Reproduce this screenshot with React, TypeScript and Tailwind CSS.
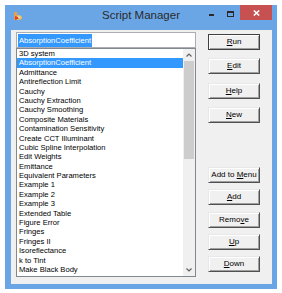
import React from "react";

const items = [
  "3D system",
  "AbsorptionCoefficient",
  "Admittance",
  "Antireflection Limit",
  "Cauchy",
  "Cauchy Extraction",
  "Cauchy Smoothing",
  "Composite Materials",
  "Contamination Sensitivity",
  "Create CCT Illuminant",
  "Cubic Spline Interpolation",
  "Edit Weights",
  "Emittance",
  "Equivalent Parameters",
  "Example 1",
  "Example 2",
  "Example 3",
  "Extended Table",
  "Figure Error",
  "Fringes",
  "Fringes II",
  "Isoreflectance",
  "k to Tint",
  "Make Black Body",
  "Make Broadband",
];

function Btn({
  pre,
  u,
  post,
  def,
  className,
}: {
  pre: string;
  u: string;
  post: string;
  def?: boolean;
  className?: string;
}) {
  return (
    <div
      className={
        "w-[52px] h-[16px] flex items-center justify-center bg-[#f0f0f0] text-[8px] leading-none text-black " +
        (def
          ? "border border-[#404040] shadow-[inset_1px_1px_0_#ffffff,inset_-1px_-1px_0_#a0a0a0] "
          : "border border-t-[#e8e8e8] border-l-[#e8e8e8] border-r-[#505050] border-b-[#505050] shadow-[inset_1px_1px_0_#ffffff,inset_-1px_-1px_0_#a0a0a0] ") +
        (className ?? "")
      }
    >
      <span>
        {pre}
        <span className="underline decoration-[0.5px] underline-offset-[1px]">{u}</span>
        {post}
      </span>
    </div>
  );
}

export default function App() {
  return (
    <div
      className="w-[282px] h-[293px] bg-white pt-[5px] pl-[5px]"
      style={{ fontFamily: '"Liberation Sans", Arial, sans-serif' }}
    >
      <div className="w-[272px] h-[284px] bg-[#6aa6e6] flex flex-col">
        {/* title bar */}
        <div className="h-[25px] grid grid-cols-[1fr_auto_1fr] items-start">
          <div className="pl-[8px] pt-[7px]">
            <svg width="10" height="9" viewBox="0 0 10 9">
              <path d="M1 0 L1 8 L4 8 L4 0 Z" fill="#e9a04a" />
              <path d="M4 3 Q9 3 9 5.5 Q9 8 4 8 Z" fill="#f0c060" />
              <path d="M2 4 L7 6 L2 8 Z" fill="#d84030" />
              <circle cx="6" cy="5.5" r="1" fill="#ffffff" opacity="0.7" />
            </svg>
          </div>
          <div className="text-[11.5px] leading-none text-[#2a2a2a] pt-[5px] whitespace-nowrap">
            Script Manager
          </div>
          <div className="flex justify-end pr-[5px]">
            <div className="w-[20px] h-[15px] flex items-center justify-center">
              <div className="w-[5px] h-[2px] bg-[#2a2a2a] mt-[4px]" />
            </div>
            <div className="w-[19px] h-[15px] flex items-center justify-center">
              <div className="w-[7px] h-[6px] border border-t-2 border-[#2a2a2a] mt-[2px]" />
            </div>
            <div className="w-[32px] h-[15px] bg-[#c75050] flex items-center justify-center">
              <svg width="7" height="6" viewBox="0 0 7 6">
                <path d="M0.8 0.5 L6.2 5.5 M6.2 0.5 L0.8 5.5" stroke="#ffffff" strokeWidth="1.6" />
              </svg>
            </div>
          </div>
        </div>
        {/* client */}
        <div className="ml-[6px] mr-[5px] flex-1 bg-[#f0f0f0] flex pl-[5px] pt-[2px]">
          <div className="w-[180px] flex flex-col">
            <div className="h-[16px] bg-white border border-[#abadb3] flex items-center pl-px">
              <span className="bg-[#3399ff] text-white text-[7.6px] leading-[13px] h-[13px] px-px">
                AbsorptionCoefficient
              </span>
            </div>
            <div className="h-[229px] bg-white border border-[#828790] flex overflow-hidden">
              <div className="flex-1 flex flex-col overflow-hidden">
                {items.map((t) => (
                  <div
                    key={t}
                    className={
                      "h-[9.4px] shrink-0 leading-[9.4px] text-[7.6px] pl-[2px] whitespace-nowrap " +
                      (t === "AbsorptionCoefficient" ? "bg-[#3399ff] text-white" : "text-black")
                    }
                  >
                    {t}
                  </div>
                ))}
              </div>
              <div className="w-[12px] bg-[#f0f0f0] flex flex-col">
                <div className="h-[12px] flex items-center justify-center">
                  <svg width="6" height="4" viewBox="0 0 6 4">
                    <path d="M0.5 3.5 L3 1 L5.5 3.5" stroke="#606060" strokeWidth="1.2" fill="none" />
                  </svg>
                </div>
                <div className="mx-[1px] h-[98px] bg-[#cdcdcd]" />
                <div className="flex-1" />
                <div className="h-[12px] flex items-center justify-center">
                  <svg width="6" height="4" viewBox="0 0 6 4">
                    <path d="M0.5 0.5 L3 3 L5.5 0.5" stroke="#606060" strokeWidth="1.2" fill="none" />
                  </svg>
                </div>
              </div>
            </div>
          </div>
          <div className="ml-[12px] flex flex-col pt-[2px]">
            <Btn pre="" u="R" post="un" def />
            <Btn pre="" u="E" post="dit" className="mt-[8px]" />
            <Btn pre="" u="H" post="elp" className="mt-[9px]" />
            <Btn pre="" u="N" post="ew" className="mt-[8px]" />
            <Btn pre="Add to " u="M" post="enu" className="mt-[44px]" />
            <Btn pre="" u="A" post="dd" className="mt-[6px]" />
            <Btn pre="Remo" u="v" post="e" className="mt-[7px]" />
            <Btn pre="" u="U" post="p" className="mt-[6px]" />
            <Btn pre="" u="D" post="own" className="mt-[6px]" />
          </div>
        </div>
        <div className="h-[5px]" />
      </div>
    </div>
  );
}
